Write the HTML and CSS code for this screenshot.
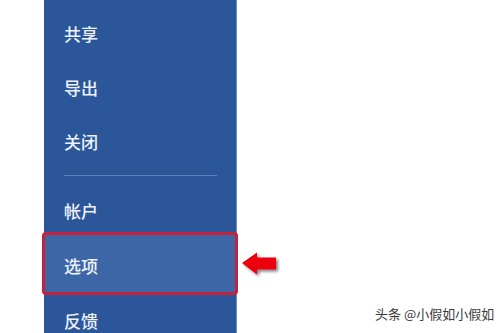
FILE: index.html
```html
<!DOCTYPE html>
<html lang="zh">
<head>
<meta charset="utf-8">
<link rel="stylesheet" href="styles.css">
</head>
<body>
<div class="page">
  <nav class="panel">
    <div class="item">共享</div>
    <div class="item">导出</div>
    <div class="item">关闭</div>
    <div class="divider"></div>
    <div class="item account">帐户</div>
    <div class="item selected">选项</div>
    <div class="item last">反馈</div>
  </nav>
  <svg class="arrow" width="40" height="28" viewBox="0 0 40 28">
    <defs>
      <filter id="sh" x="-20%" y="-20%" width="150%" height="160%">
        <feDropShadow dx="2" dy="2" stdDeviation="1.4" flood-color="#000" flood-opacity="0.5"/>
      </filter>
    </defs>
    <path d="M1 12 L16 1.5 L16 6.5 L35 6.5 L35 18.5 L16 18.5 L16 23.5 Z" fill="#ec0011" filter="url(#sh)"/>
  </svg>
  <div class="watermark">头条 @小假如小假如</div>
</div>
</body>
</html>
```

FILE: styles.css
```css
html, body {
  margin: 0;
  padding: 0;
  background: #ffffff;
}
.page {
  position: relative;
  width: 500px;
  height: 333px;
  overflow: hidden;
  font-family: "Noto Sans CJK SC", "Noto Sans", sans-serif;
}
.panel {
  margin-left: 44px;
  width: 193px;
  height: 333px;
  background: #2b579a;
  border-right: 1px solid #6d8fc2;
  padding-top: 6px;
  box-sizing: border-box;
  display: flex;
  flex-direction: column;
}
.item {
  height: 54px;
  flex: none;
  display: flex;
  align-items: center;
  padding-left: 20px;
  color: #eef2f9;
  font-size: 17px;
  font-weight: 500;
  box-sizing: border-box;
}
.divider {
  flex: none;
  height: 1px;
  margin: 7px 19px 0 20px;
  background: #5b80b9;
}
.account {
  height: 56px;
  padding-top: 12px;
}
.selected {
  height: 63px;
  margin: 0 -2px;
  padding-left: 19px;
  padding-top: 3px;
  border: 3px solid #c4213c;
  border-radius: 4px;
  background: #3d66a6;
}
.last {
  height: 50px;
}
.arrow {
  position: absolute;
  left: 241px;
  top: 251px;
}
.watermark {
  position: absolute;
  left: 375px;
  top: 305px;
  font-size: 13px;
  line-height: 18px;
  color: #3a3a3a;
  white-space: nowrap;
}
```
